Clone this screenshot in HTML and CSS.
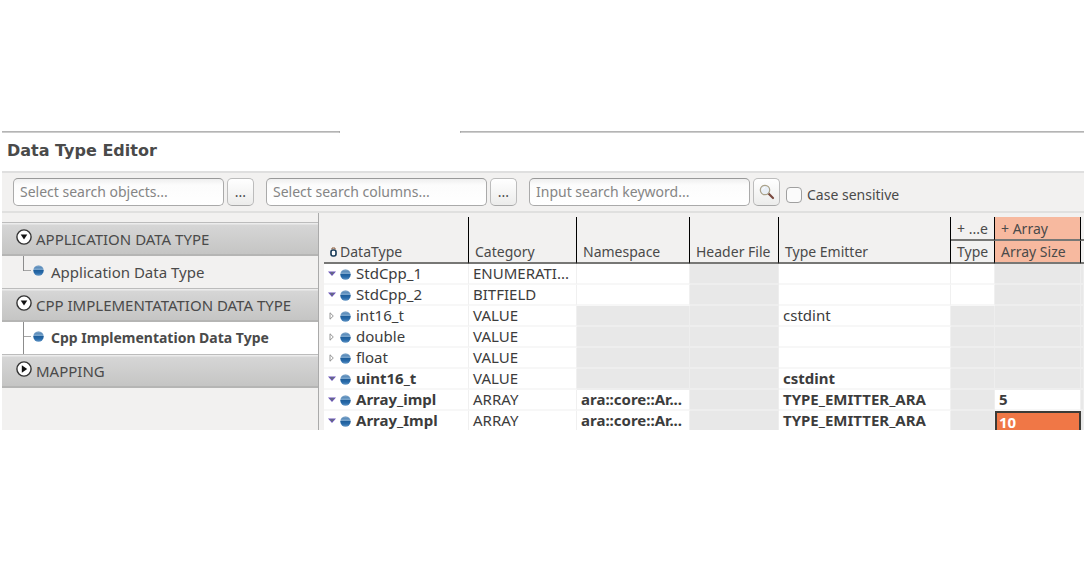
FILE: index.html
```html
<!DOCTYPE html>
<html lang="en">
<head>
<meta charset="utf-8">
<title>Data Type Editor</title>
<link rel="stylesheet" href="styles.css">
</head>
<body>
<svg class="defs" aria-hidden="true">
  <defs>
    <linearGradient id="blue" x1="0" y1="0" x2="0" y2="1">
      <stop offset="0" stop-color="#8fb0cf"/><stop offset="0.2" stop-color="#5c8dbb"/><stop offset="0.4" stop-color="#7ba6cd"/>
      <stop offset="0.5" stop-color="#1f5f9c"/><stop offset="0.75" stop-color="#2a6cab"/><stop offset="1" stop-color="#6295c4"/>
    </linearGradient>
    <symbol id="dot" viewBox="0 0 11 11"><circle cx="5.500" cy="5.500" r="5.200" fill="url(#blue)"/></symbol>
    <symbol id="open" viewBox="0 0 8 8"><path d="M0 1.500h8L4 6z" fill="#6a55b5"/><path d="M2.500 2.500h3L4 4.600z" fill="#5f7d5c"/></symbol>
    <symbol id="closed" viewBox="0 0 8 8"><path d="M2 .8v6.400L5.300 4z" fill="#fff" stroke="#8a8a8a" stroke-width=".9"/></symbol>
    <symbol id="down" viewBox="0 0 16 16"><circle cx="8" cy="8" r="7.100" fill="#fff" stroke="#333" stroke-width="1.400"/><path d="M4.700 5.500h6.600L8 10.600z" fill="#111"/></symbol>
    <symbol id="right" viewBox="0 0 16 16"><circle cx="8" cy="8" r="7.100" fill="#fff" stroke="#333" stroke-width="1.400"/><path d="M5.800 4.300v7.400L11.200 8z" fill="#111"/></symbol>
  </defs>
</svg>
<div class="editor">
  <div class="tab-edge"><span class="edge-left"></span><span class="edge-right"></span></div>
  <h1 class="title">Data Type Editor</h1>
  <form class="toolbar">
    <input class="field" type="text" placeholder="Select search objects..." aria-label="Search objects">
    <button class="tool" type="button" aria-label="Choose objects">...</button>
    <input class="field" type="text" placeholder="Select search columns..." aria-label="Search columns">
    <button class="tool" type="button" aria-label="Choose columns">...</button>
    <input class="field" type="text" placeholder="Input search keyword..." aria-label="Search keyword">
    <button class="tool" type="button" aria-label="Search">
      <svg width="16" height="16" viewBox="0 0 16 16"><path d="M9.500 9.500l4.500 4.500" stroke="#7b4a40" stroke-width="2.200" stroke-linecap="round"/><circle cx="6" cy="6" r="4.700" fill="#e9eff6" stroke="#aaa28a" stroke-width="1.200"/><path d="M3.500 5.500a2.800 2.800 0 0 1 2.500-2" stroke="#fff" fill="none"/></svg>
    </button>
    <label class="case"><input class="check" type="checkbox">Case sensitive</label>
  </form>
  <div class="body">
    <nav class="sidebar">
      <button class="section" type="button"><svg class="ring"><use href="#down"/></svg>APPLICATION DATA TYPE</button>
      <a class="item last" href="#application"><svg class="dot"><use href="#dot"/></svg>Application Data Type</a>
      <button class="section" type="button"><svg class="ring"><use href="#down"/></svg>CPP IMPLEMENTATATION DATA TYPE</button>
      <a class="item selected" href="#cpp"><svg class="dot"><use href="#dot"/></svg>Cpp Implementation Data Type</a>
      <button class="section" type="button"><svg class="ring"><use href="#right"/></svg>MAPPING</button>
    </nav>
    <main class="main">
      <table class="grid">
        <colgroup><col class="c-name"><col class="c-cat"><col class="c-ns"><col class="c-head"><col><col class="c-type"><col class="c-size"><col class="c-more"></colgroup>
        <thead>
          <tr>
            <th rowspan="2" class="name-head"><svg class="sort" viewBox="0 0 7 10"><rect x="1" y="3" width="5" height="6" rx="2" fill="#fff" stroke="#173a58" stroke-width="1.600"/><path d="M2 2.500V1h3v1.500" fill="none" stroke="#8a5a3a"/></svg>DataType</th>
            <th rowspan="2">Category</th><th rowspan="2">Namespace</th><th rowspan="2">Header File</th><th rowspan="2">Type Emitter</th>
            <th>+ ...e</th><th class="hot">+ Array</th><th class="more"></th>
          </tr>
          <tr><th>Type</th><th class="hot">Array Size</th><th class="more"></th></tr>
        </thead>
        <tbody>
          <tr><td class="name"><svg class="twist"><use href="#open"/></svg><svg class="dot"><use href="#dot"/></svg>StdCpp_1</td><td>ENUMERATI...</td><td></td><td class="off"></td><td></td><td></td><td class="off"></td><td class="off"></td></tr>
          <tr><td class="name"><svg class="twist"><use href="#open"/></svg><svg class="dot"><use href="#dot"/></svg>StdCpp_2</td><td>BITFIELD</td><td></td><td class="off"></td><td></td><td></td><td class="off"></td><td class="off"></td></tr>
          <tr><td class="name"><svg class="twist"><use href="#closed"/></svg><svg class="dot"><use href="#dot"/></svg>int16_t</td><td>VALUE</td><td class="off"></td><td class="off"></td><td>cstdint</td><td class="off"></td><td class="off"></td><td class="off"></td></tr>
          <tr><td class="name"><svg class="twist"><use href="#closed"/></svg><svg class="dot"><use href="#dot"/></svg>double</td><td>VALUE</td><td class="off"></td><td class="off"></td><td></td><td class="off"></td><td class="off"></td><td class="off"></td></tr>
          <tr><td class="name"><svg class="twist"><use href="#closed"/></svg><svg class="dot"><use href="#dot"/></svg>float</td><td>VALUE</td><td class="off"></td><td class="off"></td><td></td><td class="off"></td><td class="off"></td><td class="off"></td></tr>
          <tr><td class="name own"><svg class="twist"><use href="#open"/></svg><svg class="dot"><use href="#dot"/></svg>uint16_t</td><td>VALUE</td><td class="off"></td><td class="off"></td><td class="own">cstdint</td><td class="off"></td><td class="off"></td><td class="off"></td></tr>
          <tr><td class="name own"><svg class="twist"><use href="#open"/></svg><svg class="dot"><use href="#dot"/></svg>Array_impl</td><td>ARRAY</td><td class="own">ara::core::Ar...</td><td class="off"></td><td class="own">TYPE_EMITTER_ARA</td><td class="off"></td><td class="own">5</td><td class="off"></td></tr>
          <tr class="cut"><td class="name own"><svg class="twist"><use href="#open"/></svg><svg class="dot"><use href="#dot"/></svg>Array_Impl</td><td>ARRAY</td><td class="own">ara::core::Ar...</td><td class="off"></td><td class="own">TYPE_EMITTER_ARA</td><td class="off"></td><td class="own active">10</td><td class="off"></td></tr>
        </tbody>
      </table>
    </main>
  </div>
</div>
</body>
</html>
```
FILE: styles.css
```css
* { box-sizing: border-box; }
body {
  margin: 0;
  padding: 131px 1px 0 2px;
  background: #fff;
  color: #4a4a4a;
  font: 14px/18px "Noto Sans", "Open Sans", sans-serif;
}
button, input { font: inherit; color: inherit; }
.defs { position: absolute; width: 0; height: 0; }

.tab-edge { display: flex; justify-content: space-between; gap: 120px; height: 3px; }
.edge-left, .edge-right { height: 2px; border-top: 1px solid #b4b4b4; border-bottom: 1px solid #cdcdcd; }
.edge-left { flex: 0 0 338px; border-right: 1px solid #999; }
.edge-right { flex: 1; border-left: 1px solid #999; }
.title {
  margin: 0;
  height: 37px;
  padding: 7px 5px;
  font: bold 16px/20px "DejaVu Sans", sans-serif;
}

.toolbar {
  display: flex;
  align-items: center;
  height: 42px;
  padding: 0 11px;
  background: #f2f1f0;
  border-top: 2px solid #dfdfdf;
  border-bottom: 2px solid #e0e0df;
}
.field {
  width: 211px;
  height: 28px;
  padding: 0 6px 1px;
  border: 1px solid #aaa;
  border-top-color: #999;
  border-radius: 5px;
  background: linear-gradient(#efefef, #fcfcfc 6px, #fff);
}
.field ~ .field { width: 221px; }
.field::placeholder { color: #858585; opacity: 1; }
.tool {
  display: flex;
  align-items: center;
  justify-content: center;
  width: 27px;
  height: 28px;
  margin: 0 12px 0 3px;
  padding: 0;
  border: 1px solid #bcbcbc;
  border-bottom-color: #a8a8a8;
  border-radius: 5px;
  background: linear-gradient(#fff, #ececeb);
}
.tool:last-of-type { margin-right: 6px; }
.case { display: flex; align-items: center; gap: 5px; padding-top: 6px; }
.check {
  appearance: none;
  width: 16px;
  height: 16px;
  margin: 0;
  border: 1px solid #a0a0a0;
  border-radius: 4px;
  background: #fbfbfb;
}

.body { display: flex; height: 217px; background: #f2f1f0; }
.sidebar { flex: 0 0 317px; padding-top: 9px; border-right: 1px solid #aaa; }
.section {
  display: flex;
  align-items: center;
  gap: 4px;
  width: 100%;
  height: 34px;
  padding: 0 0 0 14px;
  border: 0;
  border-top: 1px solid #bcbcbc;
  border-bottom: 2px solid #b5b5b4;
  background: linear-gradient(#ececec 1px, #d6d6d6 2px, #c5c5c4);
  font-size: 15px;
  text-align: left;
}
.ring { flex: none; width: 16px; height: 16px; margin-bottom: 3px; }
.dot { flex: none; width: 11px; height: 11px; }
.item {
  position: relative;
  display: flex;
  align-items: center;
  gap: 7px;
  height: 32px;
  padding-left: 31px;
  color: inherit;
  font-size: 15px;
  text-decoration: none;
}
.item .dot { margin-bottom: 4px; }
.item::before {
  content: "";
  position: absolute;
  left: 21px;
  top: 0;
  height: 32px;
  border-left: 1px solid #8c8c8c;
}
.item.last::before { height: 15px; }
.item::after {
  content: "";
  position: absolute;
  left: 22px;
  top: 14px;
  width: 7px;
  border-top: 1px solid #a5a5a5;
}
.selected { background: #fff; font-size: 14px; font-weight: bold; }

.main { flex: 1; min-width: 0; padding: 4px 0 0 5px; overflow: hidden; }
.grid { width: 100%; table-layout: fixed; border-spacing: 0; }
.c-name { width: 145px; }
.c-cat { width: 108px; }
.c-ns { width: 113px; }
.c-head { width: 89px; }
.c-type { width: 44px; }
.c-size { width: 86px; }
.c-more { width: 3px; }
th {
  height: 23px;
  padding: 0 0 1px 6px;
  border-right: 1px solid #000;
  border-bottom: 2px solid #777775;
  font-weight: normal;
  text-align: left;
  vertical-align: bottom;
  white-space: nowrap;
}
thead tr:first-child th { height: 24px; }
.hot { background: #f7b99f; }
thead .more { padding: 0; border-right: 0; }
.sort { width: 7px; height: 10px; margin-right: 3px; }
td {
  height: 21px;
  padding: 0 0 1px 4px;
  border-right: 1px solid #f0f0f0;
  border-bottom: 2px solid #f7f7f7;
  background: #fff;
  color: #3c3c3c;
  font-size: 15px;
  line-height: 18px;
  white-space: nowrap;
  overflow: hidden;
}
td:last-child { padding: 0; }
.name .twist { width: 8px; height: 8px; margin-right: 4px; vertical-align: 1px; }
.name .dot { margin-right: 5px; vertical-align: -1px; }
.off { background: #e8e8e8; border-color: #eee; }
.own { font-weight: bold; }
.cut td { border-bottom: 0; height: 19px; }
.cut .active { padding: 0 0 0 2px; border: 2px solid #3c3b37; border-bottom: 0; background: #f07746; color: #fff; line-height: 16px; }
```
